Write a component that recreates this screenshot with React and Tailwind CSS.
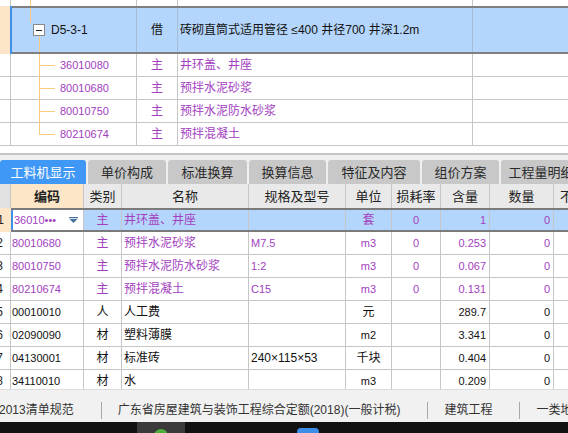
import React from 'react'

const purple = 'text-[#a33ec0]'

const treeRows = [
  { code: '36010080', name: '井环盖、井座' },
  { code: '80010680', name: '预拌水泥砂浆' },
  { code: '80010750', name: '预拌水泥防水砂浆' },
  { code: '80210674', name: '预拌混凝土' },
]

const tabs = [
  { label: '工料机显示', width: 'w-[86px]', active: true },
  { label: '单价构成', width: 'w-[78px]' },
  { label: '标准换算', width: 'w-[79px]' },
  { label: '换算信息', width: 'w-[77px]' },
  { label: '特征及内容', width: 'w-[92px]' },
  { label: '组价方案', width: 'w-[77px]' },
  { label: '工程量明细', width: 'w-[80px]' },
]

const rows = [
  { no: 2, code: '80010680', type: '主', name: '预拌水泥砂浆', spec: 'M7.5', unit: 'm3', loss: '0', qty: '0.253', amount: '0', main: true },
  { no: 3, code: '80010750', type: '主', name: '预拌水泥防水砂浆', spec: '1:2', unit: 'm3', loss: '0', qty: '0.067', amount: '0', main: true },
  { no: 4, code: '80210674', type: '主', name: '预拌混凝土', spec: 'C15', unit: 'm3', loss: '0', qty: '0.131', amount: '0', main: true },
  { no: 5, code: '00010010', type: '人', name: '人工费', spec: '', unit: '元', loss: '', qty: '289.7', amount: '0' },
  { no: 6, code: '02090090', type: '材', name: '塑料薄膜', spec: '', unit: 'm2', loss: '', qty: '3.341', amount: '0' },
  { no: 7, code: '04130001', type: '材', name: '标准砖', spec: '240×115×53', unit: '千块', loss: '', qty: '0.404', amount: '0' },
  { no: 8, code: '34110010', type: '材', name: '水', spec: '', unit: 'm3', loss: '', qty: '0.209', amount: '0' },
]

const cell = 'flex shrink-0 items-center overflow-hidden whitespace-nowrap border-r border-[#c6c6c6]'

// row number column is scrolled, so only the right part of the digit shows
const RowNo = ({ n, className = '' }) => (
  <div className={`${cell} w-[11px] justify-end pr-[7px] text-[12px] ${className}`}>
    <span>{n}</span>
  </div>
)

const TreeSection = () => (
  <div className="text-[12px]">
    {/* row above, cut off */}
    <div className="flex h-[6px]">
      <div className="w-[11px] shrink-0 border-r border-[#c6c6c6]" />
      <div className="relative w-[126px] shrink-0 border-r border-[#c6c6c6]">
        <div className="absolute left-[19px] top-0 h-full w-px bg-[#fbc97f]" />
      </div>
      <div className="w-[41px] shrink-0 border-r border-[#c6c6c6]" />
      <div className="w-[295px] shrink-0 border-r border-[#c6c6c6]" />
      <div className="flex-1" />
    </div>

    {/* parent row */}
    <div className="flex h-[48px]">
      <div className="w-[12px] shrink-0 border-r-2 border-[#3d8fe8] bg-[#fde6c7]" />
      <div className="flex flex-1 border-y-2 border-[#7f7f7f] bg-[#b5d6fc] text-[#111]">
        <div className="relative flex w-[125px] shrink-0 items-center border-r border-[#a7bdd6] pl-[21px]">
          <div className="absolute left-[18px] top-0 h-[15px] w-px bg-[#fbc97f]" />
          <div className="absolute bottom-0 left-[27px] top-[28px] w-px bg-[#fbc97f]" />
          <div className="relative flex h-[12px] w-[12px] items-center justify-center border border-[#8a8a8a] bg-white">
            <div className="h-px w-[6px] bg-[#222]" />
          </div>
          <span className="ml-[6px]">D5-3-1</span>
        </div>
        <div className="flex w-[41px] shrink-0 items-center justify-center border-r border-[#a7bdd6]">借</div>
        <div className="flex w-[295px] shrink-0 items-center border-r border-[#a7bdd6] pl-[2px]">
          砖砌直筒式适用管径 ≤400 井径700 井深1.2m
        </div>
        <div className="flex-1" />
      </div>
    </div>

    {/* child rows */}
    {treeRows.map((r, i) => (
      <div key={r.code} className={`flex h-[23px] border-b border-[#c6c6c6] ${purple}`}>
        <div className="w-[11px] shrink-0 border-r border-[#c6c6c6]" />
        <div className="relative flex w-[126px] shrink-0 items-center border-r border-[#c6c6c6] pl-[49px] text-[11px]">
          <div className={`absolute left-[28px] top-0 w-px bg-[#fbc97f] ${i === treeRows.length - 1 ? 'h-1/2' : 'h-[24px]'}`} />
          <div className="absolute left-[28px] top-1/2 h-px w-[16px] bg-[#fbc97f]" />
          {r.code}
        </div>
        <div className="flex w-[41px] shrink-0 items-center justify-center border-r border-[#c6c6c6]">主</div>
        <div className="flex w-[295px] shrink-0 items-center border-r border-[#c6c6c6] pl-[2px]">{r.name}</div>
        <div className="flex-1" />
      </div>
    ))}
  </div>
)

const Tabs = () => (
  <div>
    <div className="h-[7px] bg-white" />
    <div className="h-[2px] bg-[#c4c4c4]" />
    <div className="flex h-[29px] items-end gap-[2px] overflow-hidden bg-[#efefef] pt-[5px]">
      {tabs.map((t) => (
        <div
          key={t.label}
          className={`flex h-[24px] shrink-0 items-center justify-center rounded-t-[3px] text-[13px] ${t.width} ${
            t.active ? 'bg-[#3f98f6] text-white' : 'bg-[#c8c8c8] text-[#2a2a2a]'
          }`}
        >
          {t.label}
        </div>
      ))}
    </div>
  </div>
)

const DropArrow = () => (
  <svg width="9" height="6" viewBox="0 0 9 6" className="shrink-0">
    <path d="M0 0h9v1.2H0z" fill="#44739e" />
    <path d="M0.5 2h8L4.5 6z" fill="#44739e" />
  </svg>
)

const Table = () => (
  <div className="h-[205px] overflow-hidden bg-white">
    {/* header */}
    <div className="flex h-[24px] bg-[#e9e9e9] text-[13px] text-[#222]">
      <div className={`${cell} w-[11px] bg-[#e2e2e2]`} />
      <div className={`${cell} w-[73px] justify-center bg-[#fde6c7] font-bold`}>编码</div>
      <div className={`${cell} w-[38px] justify-center`}>类别</div>
      <div className={`${cell} w-[127px] justify-center`}>名称</div>
      <div className={`${cell} w-[97px] justify-center`}>规格及型号</div>
      <div className={`${cell} w-[46px] justify-center`}>单位</div>
      <div className={`${cell} w-[49px] justify-center`}>损耗率</div>
      <div className={`${cell} w-[49px] justify-center`}>含量</div>
      <div className={`${cell} w-[64px] justify-center`}>数量</div>
      <div className="flex flex-1 items-center overflow-hidden whitespace-nowrap pl-[6px]">不含税市场价</div>
    </div>

    {/* selected row */}
    <div className={`flex h-[24px] text-[12px] ${purple}`}>
      <RowNo n={1} className="border-r-0 bg-[#fde6c7] text-[#222]" />
      <div className="flex flex-1 border-y-2 border-[#7a7a7a] bg-[#b5d6fc]">
        <div className="flex w-[73px] shrink-0 items-center border-l-2 border-r border-l-[#3d8fe8] border-r-[#c6c6c6] bg-white pl-[1px] pr-[5px] text-[11px]">
          <span className="flex-1">36010•••</span>
          <DropArrow />
        </div>
        <div className={`${cell} w-[38px] justify-center`}>主</div>
        <div className={`${cell} w-[127px] pl-[2px]`}>井环盖、井座</div>
        <div className={`${cell} w-[97px]`} />
        <div className={`${cell} w-[46px] justify-center`}>套</div>
        <div className={`${cell} w-[49px] justify-center text-[11px]`}>0</div>
        <div className={`${cell} w-[49px] justify-end pr-[3px] text-[11px]`}>1</div>
        <div className={`${cell} w-[64px] justify-end pr-[3px] text-[11px]`}>0</div>
        <div className="flex-1" />
      </div>
    </div>

    {rows.map((r) => (
      <div key={r.no} className={`flex h-[23px] border-b border-[#c6c6c6] text-[12px] ${r.main ? purple : 'text-[#111]'}`}>
        <RowNo n={r.no} className="text-[#222]" />
        <div className={`${cell} w-[73px] pl-[1px] text-[11px]`}>{r.code}</div>
        <div className={`${cell} w-[38px] justify-center`}>{r.type}</div>
        <div className={`${cell} w-[127px] pl-[2px]`}>{r.name}</div>
        <div className={`${cell} w-[97px] pl-[2px] ${r.main ? 'text-[11px]' : 'text-[12px]'}`}>{r.spec}</div>
        <div className={`${cell} w-[46px] justify-center ${/[a-z]/.test(r.unit) ? 'text-[11px]' : ''}`}>{r.unit}</div>
        <div className={`${cell} w-[49px] justify-center text-[11px]`}>{r.loss}</div>
        <div className={`${cell} w-[49px] justify-end pr-[3px] text-[11px]`}>{r.qty}</div>
        <div className={`${cell} w-[64px] justify-end pr-[3px] text-[11px]`}>{r.amount}</div>
        <div className="flex-1" />
      </div>
    ))}
  </div>
)

const StatusBar = () => {
  const items = ['2013清单规范', '广东省房屋建筑与装饰工程综合定额(2018)(一般计税)', '建筑工程', '一类地区']
  return (
    <div className="flex h-[33px] items-center overflow-hidden whitespace-nowrap border-t border-[#dcdcdc] bg-[#f1f1f1] pt-[8px] text-[12px] text-[#333]">
      {items.map((t, i) => (
        <React.Fragment key={t}>
          {i > 0 && <div className="ml-[27px] mr-[16px] h-[17px] w-px shrink-0 bg-[#a8a8a8]" />}
          <span className={`shrink-0 ${i === 0 ? '-ml-[1px]' : ''}`}>{t}</span>
        </React.Fragment>
      ))}
    </div>
  )
}

const Taskbar = () => (
  <div className="flex h-[11px] overflow-hidden bg-[#111]">
    <div className="ml-[137px] flex w-[48px] shrink-0 justify-center bg-[#3a3a3a] pt-[7px]">
      <div className="h-[14px] w-[14px] rounded-full bg-[#4fae3c]" />
    </div>
    <div className="ml-[112px] mt-[6px] h-[10px] w-[22px] shrink-0 rounded-t-[4px] bg-[#3a8ee8]" />
  </div>
)

export default function App() {
  return (
    <div className="h-[433px] w-[568px] overflow-hidden bg-white font-['Liberation_Sans','Noto_Sans_CJK_SC',sans-serif] leading-none">
      <TreeSection />
      <Tabs />
      <Table />
      <StatusBar />
      <Taskbar />
    </div>
  )
}
